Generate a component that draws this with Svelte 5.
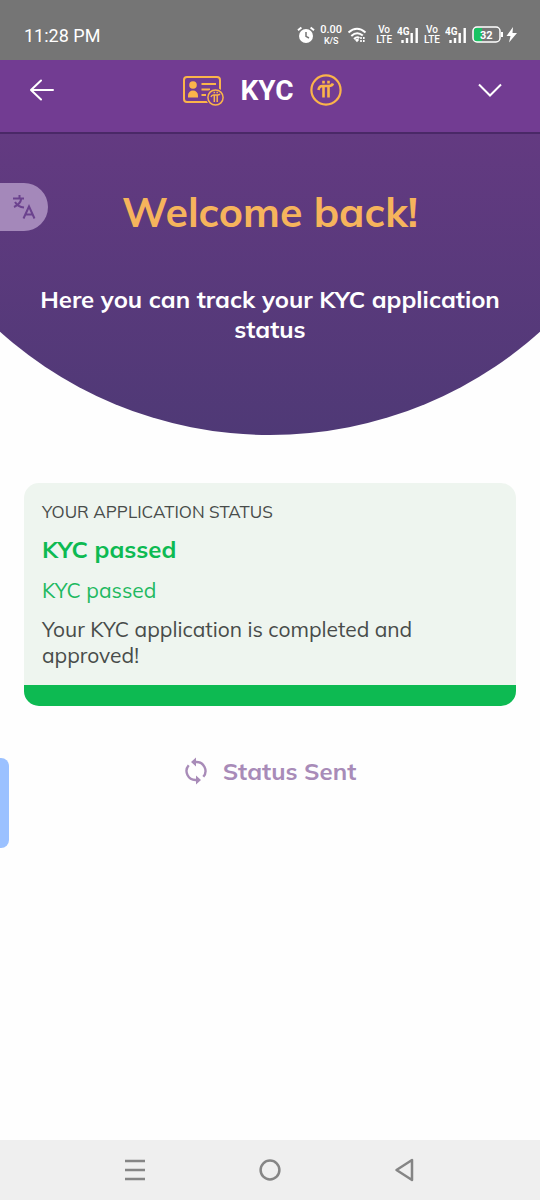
<script>
const application = {
	status: "KYC passed",
	detail: "KYC passed",
	message: "Your KYC application is completed and approved!"
};
const sims = ["4G", "4G"];

let sent = true;

function sendStatus() {
	sent = true;
}
</script>

<div class="screen">
	<div class="status-bar">
		<span class="clock">11:28 PM</span>
		<div class="indicators">
			<svg class="alarm" width="18" height="18" viewBox="0 0 18 18">
				<circle cx="9" cy="10" r="7" fill="#fff" />
				<path d="M1 4.2L4.4 1.4M17 4.2L13.6 1.4" stroke="#fff" stroke-width="2" />
				<path d="M9 6v4.4l3 1.6" fill="none" stroke="#757575" stroke-width="1.5" />
			</svg>
			<span class="stack speed"><b>0.00</b><small>K/S</small></span>
			<svg class="wifi" width="20" height="18" viewBox="0 0 20 18">
				<path d="M1.5 6.5Q10 -1 18.5 6.5M4.3 10Q10 4.6 15.8 9.6M7 13Q10 10.2 12.4 12" fill="none" stroke="#fff" stroke-width="2" />
				<path d="M7.6 13.6L10 16.2L11.6 14.4V12.4Z" fill="#fff" />
				<path d="M14 11v5M16.8 11v5" stroke="#fff" stroke-width="1.6" stroke-dasharray="2 1" />
			</svg>
			{#each sims as sim}
				<span class="stack"><b>Vo</b><b>LTE</b></span>
				<svg class="signal" width="22" height="18" viewBox="0 0 22 18">
					<text x="0" y="9">{sim}</text>
					<path d="M5.5 14v3M10 12v5M14.7 7v10M19.7 2v15" stroke="#fff" stroke-width="2.4" />
				</svg>
			{/each}
			<svg class="battery" width="46" height="18" viewBox="0 0 46 18">
				<path d="M4 2h6v14H4a2 2 0 0 1-2-2V4a2 2 0 0 1 2-2z" fill="#19c262" />
				<rect x="1" y="1" width="27" height="15" rx="4" fill="none" stroke="#fff" stroke-width="1.5" />
				<path d="M30 6v5" stroke="#fff" stroke-width="2" />
				<text x="8" y="13">32</text>
				<path d="M41 1L34.500 10H38.500L37 16.500L45 7H40.500Z" fill="#fff" />
			</svg>
		</div>
	</div>

	<header>
		<button aria-label="Back">
			<svg width="24" height="24" viewBox="0 0 24 24" fill="none" stroke="#fff" stroke-width="2" stroke-linecap="round" stroke-linejoin="round">
				<path d="M23 12H1M11 2.500L1 12l10 9.500" />
			</svg>
		</button>
		<div class="brand">
			<svg width="42" height="32" viewBox="0 0 42 32" fill="none" stroke="#fbb44a" stroke-width="2">
				<rect x="2" y="3" width="36" height="25" rx="3" />
				<circle cx="11" cy="11" r="3.800" fill="#fbb44a" stroke="none" />
				<path d="M6 23.500v-2a5 5 0 0 1 10 0v2z" fill="#fbb44a" stroke="none" />
				<path d="M19.500 10H34M19.500 15.500H28M19.500 21H24" />
				<circle cx="33.500" cy="23.500" r="9.500" fill="#723c92" stroke="none" />
				<circle cx="33.500" cy="23.500" r="7.600" stroke-width="1.500" />
				<path d="M29 23q.6-2 2.500-2h4q1.500 0 2.500-1M32.300 21v7M35.200 21v7M32.300 17.800v1.500M35.200 17.800v1.500" stroke-width="1.500" />
			</svg>
			<h1>KYC</h1>
			<svg width="32" height="32" viewBox="0 0 32 32" fill="none" stroke="#fbb44a">
				<circle cx="16" cy="16" r="14.600" stroke-width="2.200" />
				<path d="M8.500 16q.5-4 4-4h6.500q3 0 4-2.500M13.500 12.500v11M18.500 12.500v11" stroke-width="2.600" />
				<path d="M13.500 6.700v2.800M18.500 6.700v2.800" stroke-width="2.600" />
			</svg>
		</div>
		<button aria-label="Open menu">
			<svg width="24" height="24" viewBox="0 0 24 24" fill="none" stroke="#fff" stroke-width="2">
				<path d="M1 6.500L12 17.500L23 6.500" />
			</svg>
		</button>
	</header>

	<main>
		<section class="hero">
			<h2>Welcome back!</h2>
			<p>Here you can track your KYC application status</p>
		</section>

		<section class="card">
			<h3>YOUR APPLICATION STATUS</h3>
			<strong>{application.status}</strong>
			<p class="detail">{application.detail}</p>
			<p>{application.message}</p>
		</section>

		<button class="send" on:click={sendStatus}>
			<svg width="24" height="28" viewBox="0 0 24 28" fill="none" stroke="#a88bb8" stroke-width="2.400">
				<path d="M4.700 8.200A9 9 0 0 0 12 23M19.300 19.800A9 9 0 0 0 12 5" />
				<path d="M12 .5v9L7 5zM12 18.500v9l5-4.500z" fill="#a88bb8" stroke="none" />
			</svg>
			{sent ? "Status Sent" : "Send Status"}
		</button>
	</main>

	<button class="translate" aria-label="Translate">
		<svg width="24" height="26" viewBox="0 0 24 26" fill="none" stroke="#6b428e" stroke-width="2">
			<path d="M1 4.500H12M7.500 1v3.500M9.300 4.500Q8.500 10 2 13M3 8q3 5 9 5.500" />
			<path d="M11.500 24.500L17 12.500L22.500 24.500M13.500 20.500h7" />
		</svg>
	</button>
	<div class="edge-handle"></div>

	<nav>
		<button aria-label="Recent apps">
			<svg width="24" height="24" viewBox="0 0 24 24" stroke="#858585" stroke-width="2.500">
				<path d="M1 3h20M1 12h20M1 21h20" />
			</svg>
		</button>
		<button aria-label="Home">
			<svg width="24" height="24" viewBox="0 0 24 24" fill="none" stroke="#858585" stroke-width="2.500">
				<circle cx="12" cy="12" r="9.400" />
			</svg>
		</button>
		<button aria-label="Back">
			<svg width="24" height="24" viewBox="0 0 24 24" fill="none" stroke="#858585" stroke-width="2.500" stroke-linejoin="round">
				<path d="M20 2v20L4.500 12z" />
			</svg>
		</button>
	</nav>
</div>

<style>
	:global(body) {
		margin: 0;
		background: #fefefe;
	}

	.screen {
		position: relative;
		display: flex;
		flex-direction: column;
		min-height: 100vh;
		font-family: "Mulish", "Open Sans", sans-serif;
		color: #484c4a;
	}

	h1, h2, h3, p {
		margin: 0;
	}

	button {
		display: flex;
		align-items: center;
		justify-content: center;
		padding: 0;
		border: 0;
		background: none;
		font: inherit;
		cursor: pointer;
	}

	svg {
		display: block;
		flex-shrink: 0;
	}

	.status-bar {
		display: flex;
		align-items: center;
		justify-content: space-between;
		height: 60px;
		padding: 10px 22px 0 24px;
		box-sizing: border-box;
		background: #757575;
		color: #fff;
		font-family: Roboto, sans-serif;
	}

	.clock {
		font-size: 18px;
	}

	.indicators {
		display: flex;
		align-items: center;
		gap: 5px;
	}

	.indicators text {
		fill: #fff;
		font-size: 10px;
		font-weight: 700;
	}

	.indicators .battery text {
		font-size: 11px;
	}

	.stack {
		display: flex;
		flex-direction: column;
		align-items: center;
		font-size: 10px;
		line-height: 10px;
		font-weight: 500;
	}

	.stack b {
		font-weight: 500;
	}

	.stack small {
		font-size: 9px;
	}

	.speed b {
		font-size: 11px;
		line-height: 12px;
	}

	.wifi {
		margin-right: 4px;
	}

	header {
		display: flex;
		align-items: center;
		justify-content: space-between;
		height: 74px;
		padding: 0 38px 12px 30px;
		box-sizing: border-box;
		border-bottom: 2px solid #4a2867;
		background: #723c92;
	}

	.brand {
		display: flex;
		align-items: center;
		gap: 16px;
		margin-right: 8px;
	}

	h1 {
		padding-top: 2px;
		color: #fff;
		font-family: Roboto, sans-serif;
		font-size: 28px;
		font-weight: 700;
		line-height: 32px;
	}

	main {
		flex: 1;
		display: flex;
		flex-direction: column;
	}

	.hero {
		padding: 53px 24px 91px;
		background: linear-gradient(#633a81, #4f3976);
		clip-path: ellipse(75% 75vw at 50% calc(100% - 75vw));
		text-align: center;
	}

	h2 {
		margin-bottom: 47px;
		color: #f6b45c;
		font-size: 41px;
		font-weight: 700;
		line-height: 50px;
	}

	.hero p {
		color: #fff;
		font-size: 24px;
		font-weight: 700;
		line-height: 30px;
	}

	.card {
		margin: 48px 24px 47px;
		padding: 16px 18px 17px;
		border-bottom: 21px solid #0dba52;
		border-radius: 15px;
		background: #eef5ef;
		font-size: 21px;
		line-height: 26px;
	}

	h3 {
		font-size: 17px;
		font-weight: 400;
		line-height: 26px;
	}

	strong {
		display: block;
		margin: 10px 0 14px;
		color: #0dba52;
		font-size: 24px;
		line-height: 28px;
	}

	.detail {
		margin-bottom: 13px;
		color: #1fb961;
	}

	.send {
		align-self: center;
		gap: 15px;
		color: #a88bb8;
		font-size: 24px;
		font-weight: 700;
		line-height: 36px;
	}

	.translate {
		position: absolute;
		top: 183px;
		left: 0;
		width: 48px;
		height: 48px;
		border-radius: 0 24px 24px 0;
		background: #a488ba;
	}

	.edge-handle {
		position: absolute;
		top: 758px;
		left: 0;
		width: 9px;
		height: 90px;
		border-radius: 0 8px 8px 0;
		background: #9bc1ff;
	}

	nav {
		display: flex;
		justify-content: center;
		gap: 110px;
		height: 60px;
		background: #efefef;
	}
</style>
